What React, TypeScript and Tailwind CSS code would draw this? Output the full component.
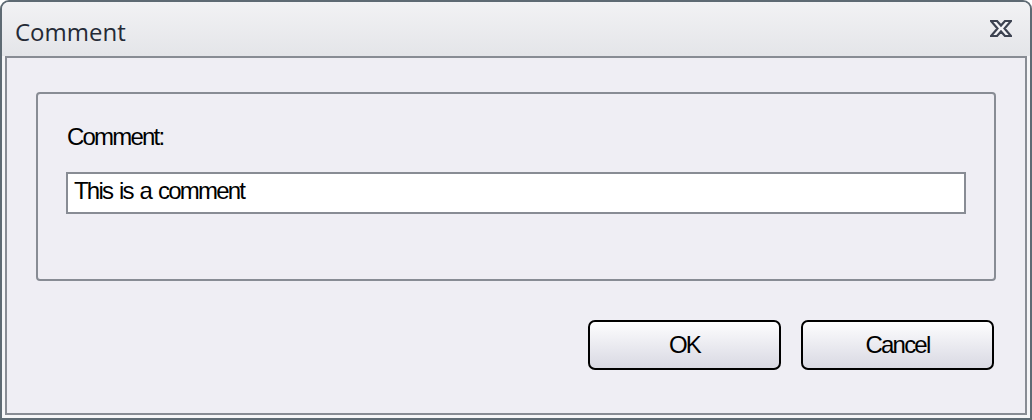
const CloseIcon = () => (
  <svg width="22" height="17" viewBox="0 0 22 17">
    <polygon
      points="1,1 7,1 11,5.5 15,1 21,1 14.5,8.5 21,16 15,16 11,11.5 7,16 1,16 7.5,8.5"
      fill="#f4f4f7"
      stroke="#3d4351"
      strokeWidth="2.2"
      strokeLinejoin="miter"
    />
  </svg>
);

const DialogButton = ({ label }: { label: string }) => (
  <button className="flex h-[50px] w-[193px] items-center justify-center rounded-[7px] border-2 border-black bg-gradient-to-b from-[#fdfdfe] to-[#d9d9e3] text-[24px] leading-[24px] tracking-[-1.8px] text-black">
    {label}
  </button>
);

const App = () => {
  return (
    <div
      className="h-[420px] w-[1032px] rounded-t-[9px] bg-[#5e6a73] p-[2px]"
      style={{ fontFamily: '"Liberation Sans", Arial, sans-serif' }}
    >
      <div className="flex h-[416px] flex-col overflow-hidden rounded-t-[7px] bg-[#f5f5f7]">
        <div className="flex h-[54px] shrink-0 items-start justify-between bg-gradient-to-b from-[#f2f2f4] to-[#e4e5e9] pl-[13px] pr-[18px]">
          <span
            className="pt-[14px] text-[24px] leading-[32px] text-[#252a36]"
            style={{ fontFamily: '"Open Sans", "Noto Sans", sans-serif' }}
          >
            Comment
          </span>
          <div className="mt-[18px]">
            <CloseIcon />
          </div>
        </div>
        <div className="mx-[3px] mb-[3px] flex flex-1 flex-col border-2 border-[#888c94] bg-[#efeef4]">
          <div className="mx-[29px] mt-[34px] h-[189px] rounded-[4px] border-2 border-[#888c94] px-[28px] pt-[31px]">
            <p className="pl-px text-[24px] leading-[24px] tracking-[-1.8px] text-black">Comment:</p>
            <div className="mt-[23px] h-[42px] border-2 border-[#888c94] bg-white pl-[6px] pt-[5px] text-[24px] leading-[24px] tracking-[-1.8px] text-black [word-spacing:2px]">
              This is a comment
            </div>
          </div>
          <div className="mt-[39px] flex justify-end gap-[20px] pr-[31px]">
            <DialogButton label="OK" />
            <DialogButton label="Cancel" />
          </div>
        </div>
      </div>
    </div>
  );
};

export default App;
